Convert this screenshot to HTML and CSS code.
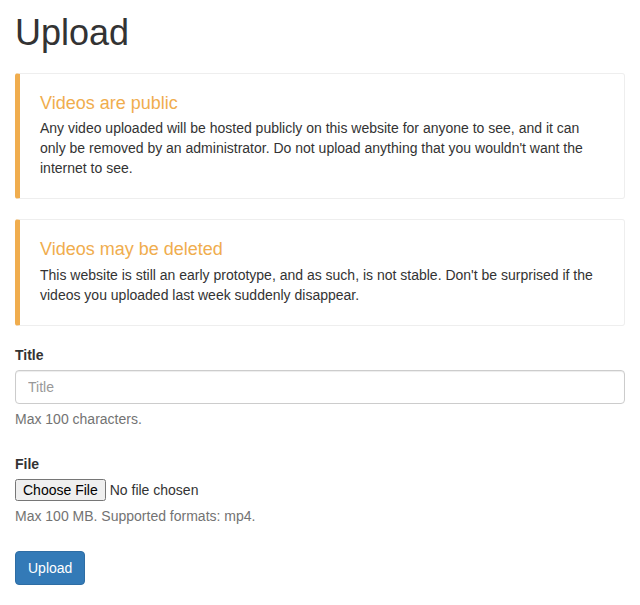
FILE: index.html
```html
<!DOCTYPE html>
<html>
<head>
<meta charset="utf-8">
<title>Upload</title>
<link rel="stylesheet" href="styles.css">
</head>
<body>
<div class="container">
  <h1 class="page-title">Upload</h1>
  <div class="callout">
    <h4 class="callout-title">Videos are public</h4>
    <p class="callout-text">Any video uploaded will be hosted publicly on this website for anyone to see, and it can only be removed by an administrator. Do not upload anything that you wouldn't want the internet to see.</p>
  </div>
  <div class="callout">
    <h4 class="callout-title">Videos may be deleted</h4>
    <p class="callout-text">This website is still an early prototype, and as such, is not stable. Don't be surprised if the videos you uploaded last week suddenly disappear.</p>
  </div>
  <form class="upload-form">
    <div class="form-group">
      <label class="form-label" for="title">Title</label>
      <input class="form-control" type="text" id="title" placeholder="Title">
      <span class="help-block">Max 100 characters.</span>
    </div>
    <div class="form-group">
      <label class="form-label" for="file">File</label>
      <input class="file-input" type="file" id="file">
      <span class="help-block">Max 100 MB. Supported formats: mp4.</span>
    </div>
    <div class="actions">
      <button class="btn-primary" type="submit">Upload</button>
    </div>
  </form>
</div>
</body>
</html>
```

FILE: styles.css
```css
* { box-sizing: border-box; }
html, body {
  margin: 0;
  padding: 0;
  background: #fff;
}
body {
  font-family: "Liberation Sans", Arial, Helvetica, sans-serif;
  font-size: 14px;
  line-height: 1.42857143;
  color: #333;
}
.container {
  padding: 0 15px;
}
.page-title {
  font-size: 36px;
  font-weight: 500;
  line-height: 1.1;
  margin: 13px 0 10px;
  color: #333;
}
.callout {
  margin: 20px 0;
  padding: 20px;
  border: 1px solid #eee;
  border-left: 5px solid #f0ad4e;
  border-radius: 3px;
}
.callout-title {
  margin: 0 0 5px;
  font-size: 18px;
  font-weight: 500;
  line-height: 1.1;
  color: #f0ad4e;
}
.callout-text {
  margin: 0;
}
.upload-form {
  display: flex;
  flex-direction: column;
  margin-top: -1px;
}
.form-group {
  display: flex;
  flex-direction: column;
  align-items: flex-start;
  margin-bottom: 15px;
}
.form-label {
  font-weight: 700;
  margin-bottom: 5px;
}
.form-control {
  width: 100%;
  height: 34px;
  padding: 6px 12px;
  font: inherit;
  color: #555;
  background: #fff;
  border: 1px solid #ccc;
  border-radius: 4px;
  box-shadow: inset 0 1px 1px rgba(0,0,0,.075);
  margin: 0;
}
.form-control::placeholder {
  color: #999;
  opacity: 1;
}
.file-input {
  font: inherit;
  margin: 0;
  color: #333;
}
.help-block {
  display: block;
  margin-top: 5px;
  margin-bottom: 10px;
  color: #737373;
}
.actions {
  display: flex;
}
.btn-primary {
  display: inline-block;
  font: inherit;
  padding: 6px 12px;
  margin: 0;
  color: #fff;
  background: #337ab7;
  border: 1px solid #2e6da4;
  border-radius: 4px;
  line-height: 1.42857143;
  cursor: pointer;
}
```
